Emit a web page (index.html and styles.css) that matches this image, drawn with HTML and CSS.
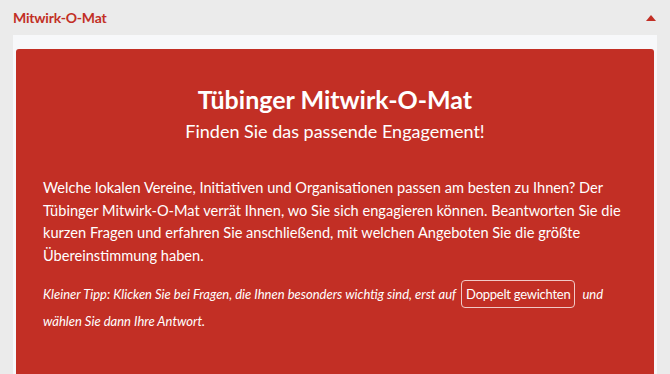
FILE: index.html
```html
<!DOCTYPE html>
<html lang="de">
<head>
    <meta charset="UTF-8">
    <title>Mitwirk-O-Mat</title>
    <link rel="stylesheet" href="styles.css">
</head>
<body>
    <div class="accordion">
        <div class="accordion-head">
            <span class="accordion-title">Mitwirk-O-Mat</span>
            <span class="accordion-toggle"></span>
        </div>
        <div class="accordion-body">
            <section class="intro">
                <h1>Tübinger Mitwirk-O-Mat</h1>
                <p class="subtitle">Finden Sie das passende Engagement!</p>
                <p class="lead">Welche lokalen Vereine, Initiativen und Organisationen passen am besten zu Ihnen? Der Tübinger Mitwirk-O-Mat verrät Ihnen, wo Sie sich engagieren können. Beantworten Sie die kurzen Fragen und erfahren Sie anschließend, mit welchen Angeboten Sie die größte Übereinstimmung haben.</p>
                <p class="tip">Kleiner Tipp: Klicken Sie bei Fragen, die Ihnen besonders wichtig sind, erst auf <span class="btn-inline">Doppelt gewichten</span> und wählen Sie dann Ihre Antwort.</p>
            </section>
        </div>
    </div>
</body>
</html>
```

FILE: styles.css
```css
body {
    margin: 0;
    background-color: #ebebeb;
    font-family: 'Lato', 'Open Sans', sans-serif;
    overflow: hidden;
}

.accordion {
    padding: 0 13px;
}

.accordion-head {
    display: flex;
    justify-content: space-between;
    align-items: center;
    height: 35px;
}

.accordion-title {
    color: #c22f25;
    font-weight: bold;
    font-size: 14px;
    letter-spacing: -0.2px;
}

/* little up-arrow on the right */
.accordion-toggle {
    width: 0;
    height: 0;
    border-left: 5px solid transparent;
    border-right: 5px solid transparent;
    border-bottom: 6px solid #c22f25;
    margin-right: 1px;
}

.accordion-body {
    box-sizing: border-box;
    background-color: #f7f8fa;
    padding: 14px 3px 0;
    height: 339px;
}

.intro {
    box-sizing: border-box;
    background-color: #c22f25;
    color: #fff;
    border-radius: 3px 3px 0 0;
    padding: 33px 27px 0;
    height: 100%;
}

.intro h1 {
    margin: 0;
    text-align: center;
    font-size: 25px;
    font-weight: bold;
    line-height: 34px;
}

.subtitle {
    margin: 3px 0 0;
    text-align: center;
    font-size: 18px;
    line-height: 24px;
}

.lead {
    margin: 34px 0 0;
    font-size: 14.6px;
    line-height: 22.7px;
}

.tip {
    margin: 13px 0 0;
    font-style: italic;
    font-size: 13px;
    line-height: 27px;
}

.btn-inline {
    display: inline-block;
    vertical-align: middle;
    font-style: normal;
    font-size: 13px;
    letter-spacing: -0.25px;
    line-height: 26px;
    padding: 0 4px;
    margin: -3px 4px 0 2px;
    border: 1px solid #f1c9c6;
    border-radius: 4px;
}
```
